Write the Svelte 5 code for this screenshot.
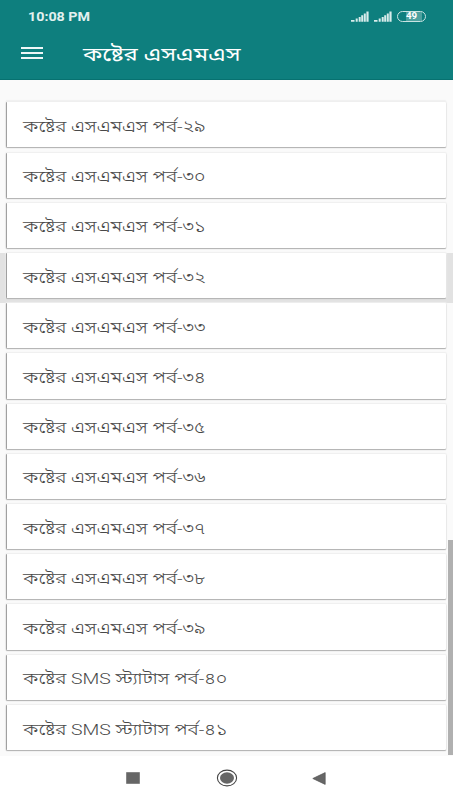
<script>
  const bengali = "০১২৩৪৫৬৭৮৯";
  const toBengali = (n) => String(n).split("").map((d) => bengali[d]).join("");

  let selected = $state(32);

  const parts = Array.from({ length: 13 }, (_, i) => {
    const number = 29 + i;
    const name = number < 40 ? "কষ্টের এসএমএস" : "কষ্টের SMS স্ট্যাটাস";
    return { number, title: `${name} পর্ব-${toBengali(number)}` };
  });
</script>

<div class="screen">
  <header>
    <div class="status">
      <span class="time">10:08 PM</span>
      <span class="indicators">
        {#each [1, 2] as sim (sim)}
          <svg class="signal" width="18" height="11" viewBox="0 0 18 11">
            <path d="M0 9h3.5v1.8H0zM4.7 7.5h2v3.3h-2zM7.7 6h2v4.8h-2zM10.2 4.3h2v6.5h-2zM12.8 2.5h2v8.3h-2zM15.4.5h2.2v10.3h-2.2z" />
          </svg>
        {/each}
        <span class="battery"><b>49</b></span>
      </span>
    </div>
    <div class="toolbar">
      <button class="menu" aria-label="Menu"><i></i><i></i><i></i></button>
      <h1><span>কষ্টের এসএমএস</span></h1>
    </div>
  </header>

  <main>
    <ul>
      {#each parts as part (part.number)}
        <li class:selected={selected === part.number}>
          <button class="card" onclick={() => (selected = part.number)}>
            <span class="title">{part.title}</span>
          </button>
        </li>
      {/each}
    </ul>
    <div class="scroll"></div>
  </main>

  <nav>
    <svg width="14" height="12" viewBox="0 0 14 12"><path d="M.5.5h13v11H.5z" fill="#666" stroke="#666" stroke-width=".6" /></svg>
    <svg width="22" height="18" viewBox="0 0 22 18">
      <ellipse cx="11" cy="9" rx="9.6" ry="7.9" fill="#fff" stroke="#444" stroke-width="1.1" />
      <ellipse cx="11" cy="9" rx="7" ry="5.7" fill="#666" />
    </svg>
    <svg width="14" height="13" viewBox="0 0 14 13"><path d="M.8 6.5 13.2.6v11.8z" fill="#666" stroke="#555" stroke-width=".7" /></svg>
  </nav>
</div>

<style>
  :global(body) {
    margin: 0;
    overflow: hidden;
  }
  .screen {
    display: flex;
    flex-direction: column;
    width: 453px;
    height: 800px;
    background: #fafafa;
    font-family: Roboto, "Noto Sans Bengali", "Noto Sans", sans-serif;
  }
  button {
    border: 0;
    padding: 0;
    font: inherit;
    text-align: left;
  }

  /* Header */
  header {
    height: 80px;
    box-sizing: border-box;
    background: #0e7f7e;
    border-bottom: 1px solid #077170;
    color: #fff;
  }
  .status {
    display: flex;
    justify-content: space-between;
    align-items: center;
    height: 33px;
    padding: 0 27px 0 28px;
    box-sizing: border-box;
  }
  .time {
    font-size: 12px;
    font-weight: 700;
    line-height: 14px;
    color: #e3f1f0;
    transform: scaleX(1.19);
    transform-origin: left;
  }
  .indicators {
    display: flex;
    align-items: center;
    gap: 5px;
  }
  .signal {
    fill: #d8eceb;
  }
  .battery {
    width: 29px;
    height: 11px;
    box-sizing: border-box;
    border: 1.4px solid #c9e3e2;
    border-radius: 6px;
    background: linear-gradient(90deg, #0e7f7e 30%, #4ea19f 30% 90%, #0e7f7e 90%);
    font-size: 8.5px;
    line-height: 9px;
    text-align: center;
  }
  .battery b {
    display: block;
    transform: scaleX(1.15);
  }
  .toolbar {
    display: flex;
    align-items: center;
    height: 40px;
    padding-left: 21px;
  }
  .menu {
    display: flex;
    flex-direction: column;
    gap: 3px;
    width: 22px;
    margin-right: 40px;
    background: none;
  }
  .menu i {
    height: 2px;
    background: #eef7f7;
  }
  h1 {
    margin: 0;
    padding-top: 3px;
    font-size: 19.5px;
    font-weight: 400;
    line-height: 24px;
    white-space: nowrap;
  }
  h1 span {
    display: inline-block;
    transform: scaleX(1.225);
    transform-origin: left;
  }

  /* List */
  main {
    display: flex;
    height: 676px;
  }
  ul {
    flex: none;
    width: 448px;
    margin: 0;
    padding: 22.3px 0 0;
    list-style: none;
  }
  li {
    width: 453px;
    height: 50.23px;
    box-sizing: border-box;
    padding: 0 7px 5px 6px;
  }
  li.selected {
    background: #e2e2e2;
  }
  .card {
    display: flex;
    align-items: center;
    width: 440px;
    height: 45.2px;
    padding: 4px 0 0 16px;
    box-sizing: border-box;
    border-left: 1px solid #a0a0a0;
    border-radius: 1px;
    background: #fff;
    box-shadow: 0 1px 1px #b0b0b0, 0 0 1px 1px #efefef;
    color: #484848;
  }
  li:first-child .card {
    box-shadow: 0 1px 1px #b0b0b0, 0 0 1px 1px #efefef, 0 -2px 1px #f0f0f0;
  }
  .title {
    font-size: 15.5px;
    font-weight: 300;
    line-height: 22px;
    white-space: nowrap;
    transform: scaleX(1.25);
    transform-origin: left;
  }
  .scroll {
    z-index: 1;
    width: 5px;
    height: 215px;
    margin-top: 460px;
    background: #b0b0b0;
  }

  /* Navigation bar */
  nav {
    display: flex;
    align-items: center;
    height: 44px;
    padding-left: 126px;
    background: #fff;
  }
  nav svg:nth-child(2) {
    margin: 0 74px 0 76px;
  }
</style>
